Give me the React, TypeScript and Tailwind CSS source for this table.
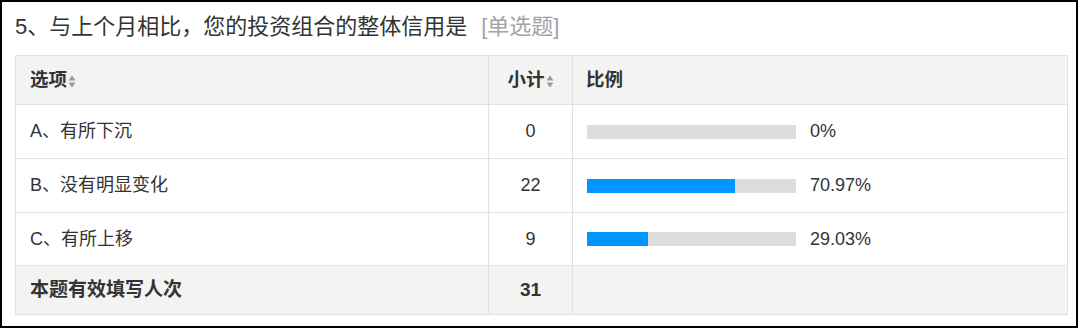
import React from "react";

type Row = { label: string; count: number; pct: number };

const rows: Row[] = [
  { label: "A、有所下沉", count: 0, pct: 0 },
  { label: "B、没有明显变化", count: 22, pct: 70.97 },
  { label: "C、有所上移", count: 9, pct: 29.03 },
];

const font = { fontFamily: '"Liberation Sans", "Noto Sans CJK SC", sans-serif' };

function SortIcon() {
  return (
    <svg width="8" height="13" viewBox="0 0 8 13" className="inline-block ml-[1px] align-middle">
      <path d="M4 0.5 L7.5 5.5 L0.5 5.5 Z" fill="#999" />
      <path d="M4 12.5 L7.5 7.5 L0.5 7.5 Z" fill="#999" />
    </svg>
  );
}

export default function App() {
  return (
    <div className="w-[1079px] h-[328px] bg-white" style={font}>
      <div className="w-[1078px] h-[328px] border-2 border-black bg-white">
        {/* Title */}
        <div className="h-[53px] pl-[13px] pb-[3px] text-[22px] leading-[30px] text-[#333] flex items-center">
          <span>5、与上个月相比，您的投资组合的整体信用是</span>
          <span className="ml-[14px] text-[#a3a3a3]">[单选题]</span>
        </div>

        {/* Table */}
        <table className="ml-[13px] w-[1053px] border-collapse text-[18px] text-[#333]">
          <thead>
            <tr className="h-[49px] bg-[#f3f3f3]">
              <th className="border border-[#e2e2e2] text-left pl-[14px] font-bold w-[473px] text-[18.5px]">
                选项<SortIcon />
              </th>
              <th className="border border-[#e2e2e2] text-center font-bold w-[84px] text-[18.5px]">
                小计<SortIcon />
              </th>
              <th className="border border-[#e2e2e2] text-left pl-[13px] font-bold text-[18.5px]">比例</th>
            </tr>
          </thead>
          <tbody>
            {rows.map((r, i) => (
              <tr key={r.label} className={i === 2 ? "h-[53px]" : "h-[54px]"}>
                <td className="border border-[#e2e2e2] pl-[14px]">{r.label}</td>
                <td className="border border-[#e2e2e2] text-center">{r.count}</td>
                <td className="border border-[#e2e2e2] pl-[14px]">
                  <div className="flex items-center">
                    <div className="w-[209px] h-[14px] bg-[#dddddd]">
                      <div className="h-full bg-[#0095ff]" style={{ width: `${r.pct}%` }} />
                    </div>
                    <span className="ml-[14px]">{r.pct === 0 ? "0%" : `${r.pct.toFixed(2)}%`}</span>
                  </div>
                </td>
              </tr>
            ))}
            <tr className="h-[49px] bg-[#f3f3f3] font-bold text-[19px]">
              <td className="border border-[#e2e2e2] pl-[14px]">本题有效填写人次</td>
              <td className="border border-[#e2e2e2] text-center">31</td>
              <td className="border border-[#e2e2e2]"></td>
            </tr>
          </tbody>
        </table>
      </div>
    </div>
  );
}
